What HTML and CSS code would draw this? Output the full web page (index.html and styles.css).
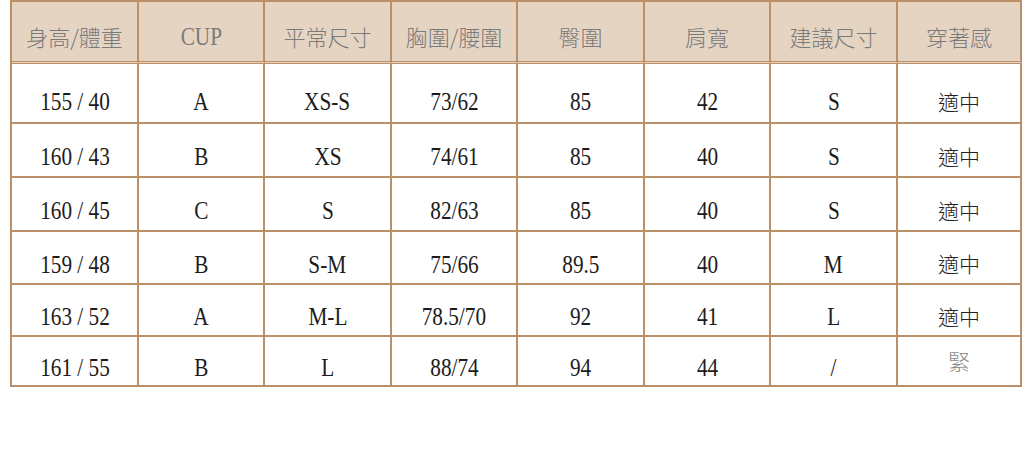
FILE: index.html
```html
<!DOCTYPE html>
<html>
<head>
<meta charset="utf-8">
<link rel="stylesheet" href="styles.css">
</head>
<body>
<table class="size-table">
  <colgroup>
    <col class="c1"><col class="c2"><col class="c3"><col class="c4"><col class="c5"><col class="c6"><col class="c7"><col class="c8">
  </colgroup>
  <thead>
    <tr class="head">
      <th class="cjk">身高/體重</th>
      <th><span class="n">CUP</span></th>
      <th class="cjk">平常尺寸</th>
      <th class="cjk">胸圍/腰圍</th>
      <th class="cjk">臀圍</th>
      <th class="cjk">肩寬</th>
      <th class="cjk">建議尺寸</th>
      <th class="cjk">穿著感</th>
    </tr>
  </thead>
  <tbody>
    <tr class="r1"><td><span class="n">155 / 40</span></td><td><span class="n">A</span></td><td><span class="n">XS-S</span></td><td><span class="n">73/62</span></td><td><span class="n">85</span></td><td><span class="n">42</span></td><td><span class="n">S</span></td><td class="cjk">適中</td></tr>
    <tr class="r2"><td><span class="n">160 / 43</span></td><td><span class="n">B</span></td><td><span class="n">XS</span></td><td><span class="n">74/61</span></td><td><span class="n">85</span></td><td><span class="n">40</span></td><td><span class="n">S</span></td><td class="cjk">適中</td></tr>
    <tr class="r3"><td><span class="n">160 / 45</span></td><td><span class="n">C</span></td><td><span class="n">S</span></td><td><span class="n">82/63</span></td><td><span class="n">85</span></td><td><span class="n">40</span></td><td><span class="n">S</span></td><td class="cjk">適中</td></tr>
    <tr class="r4"><td><span class="n">159 / 48</span></td><td><span class="n">B</span></td><td><span class="n">S-M</span></td><td><span class="n">75/66</span></td><td><span class="n">89.5</span></td><td><span class="n">40</span></td><td><span class="n">M</span></td><td class="cjk">適中</td></tr>
    <tr class="r5"><td><span class="n">163 / 52</span></td><td><span class="n">A</span></td><td><span class="n">M-L</span></td><td><span class="n">78.5/70</span></td><td><span class="n">92</span></td><td><span class="n">41</span></td><td><span class="n">L</span></td><td class="cjk">適中</td></tr>
    <tr class="r6"><td><span class="n">161 / 55</span></td><td><span class="n">B</span></td><td><span class="n">L</span></td><td><span class="n">88/74</span></td><td><span class="n">94</span></td><td><span class="n">44</span></td><td><span class="n">/</span></td><td class="cjk tight">緊</td></tr>
  </tbody>
</table>
</body>
</html>
```

FILE: styles.css
```css
html, body {
  margin: 0;
  padding: 0;
  background: #ffffff;
}

.size-table {
  margin-left: 10px;
  width: 1012px;
  table-layout: fixed;
  border-collapse: separate;
  border-spacing: 0;
  border-top: 2px solid #bb9068;
  border-left: 2px solid #bb9068;
  font-family: "Liberation Serif", "Noto Sans CJK TC", serif;
  font-size: 25px;
  color: #1c1c1c;
}

.c1, .c3, .c5, .c7 { width: 127px; }
.c2, .c4, .c6 { width: 126px; }
.c8 { width: 124px; }

.size-table th,
.size-table td {
  border-right: 2px solid #bb9068;
  border-bottom: 2px solid #bb9068;
  text-align: center;
  vertical-align: middle;
  padding: 14px 0 0 0;
  line-height: 24px;
  box-sizing: border-box;
}

.n {
  display: inline-block;
  transform: scaleX(0.85);
  white-space: nowrap;
}

.size-table th {
  background: #e6d4c3;
  color: #7a7a7a;
  font-weight: normal;
  border-bottom: 3px double #bb9068;
  padding-top: 10px;
}

.size-table th.cjk {
  font-family: "Noto Sans CJK TC", sans-serif;
  font-size: 22px;
  font-weight: 300;
  padding-top: 8px;
}

.size-table td.cjk {
  font-family: "Noto Sans CJK TC", sans-serif;
  font-size: 21px;
  font-weight: 300;
  color: #222222;
  padding-top: 11px;
}

.size-table .r1 td {
  padding-top: 18px;
}

.size-table .r1 td.cjk {
  padding-top: 15px;
}

.size-table td.tight {
  color: #8a8a8a;
  font-size: 22px;
  padding-top: 0;
  padding-bottom: 2px;
}

.head { height: 62px; }
.r1 { height: 60px; }
.r2 { height: 54px; }
.r3 { height: 54px; }
.r4 { height: 53px; }
.r5 { height: 52px; }
.r6 { height: 50px; }
```
